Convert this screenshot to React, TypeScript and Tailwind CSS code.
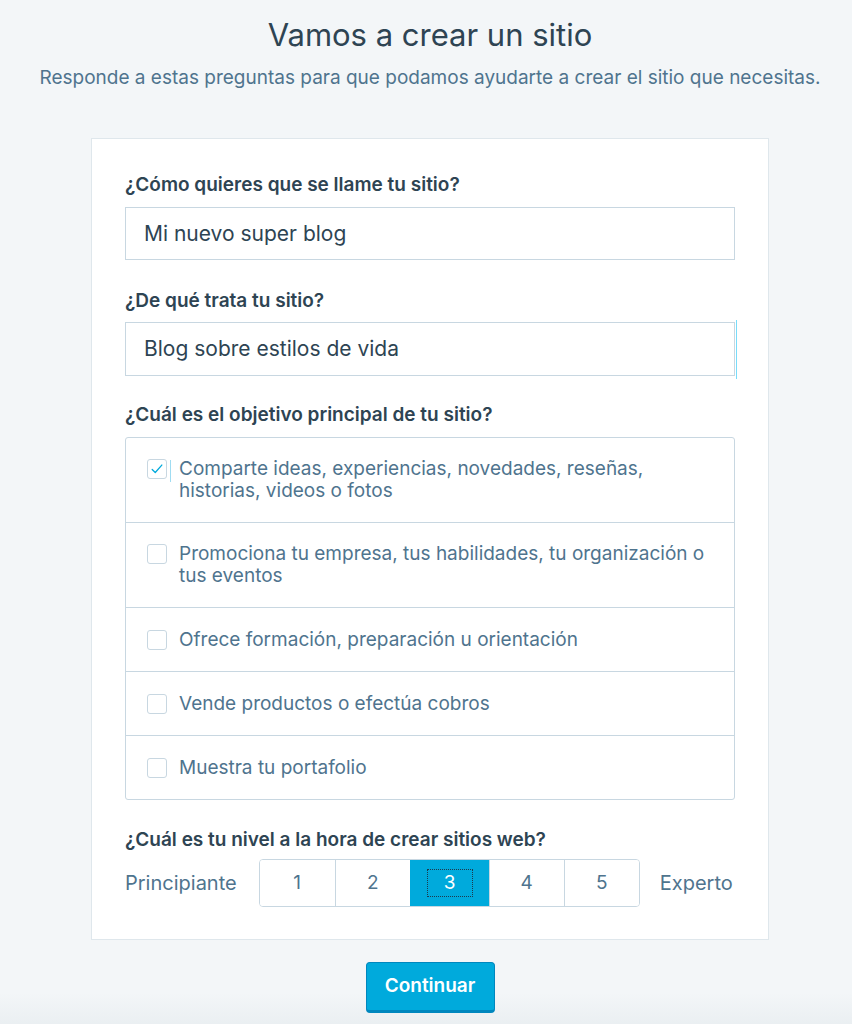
import { useState } from 'react';

const goals = [
  'Comparte ideas, experiencias, novedades, reseñas, historias, videos o fotos',
  'Promociona tu empresa, tus habilidades, tu organización o tus eventos',
  'Ofrece formación, preparación u orientación',
  'Vende productos o efectúa cobros',
  'Muestra tu portafolio',
];

function CheckIcon() {
  return (
    <svg viewBox="0 0 16 16" className="h-[14px] w-[14px]" fill="none">
      <path d="M2.5 8.5l3.5 3.5 7.5-8.5" stroke="#00aadc" strokeWidth="1.5" strokeLinecap="round" strokeLinejoin="round" />
    </svg>
  );
}

export default function App() {
  const [checked, setChecked] = useState<boolean[]>([true, false, false, false, false]);
  const [level, setLevel] = useState(3);

  return (
    <div
      className="relative min-h-screen bg-[#f3f6f8] flex flex-col items-center pl-[8px] text-[#2e4453]"
      style={{ fontFamily: 'Inter, "Noto Sans", sans-serif' }}
    >
      <h1 className="mt-[15px] text-[31px] leading-[40px] font-normal">Vamos a crear un sitio</h1>
      <p className="mt-[9px] text-[19px] leading-[28px] text-[#4f748e]">
        Responde a estas preguntas para que podamos ayudarte a crear el sitio que necesitas.
      </p>

      <div className="mt-[46px] w-[678px] bg-white border border-[#dfe7ec] px-[33px] pt-[34px] pb-[32px]">
        <label className="block text-[19px] leading-[24px] font-semibold">¿Cómo quieres que se llame tu sitio?</label>
        <div className="mt-[10px] h-[53px] border border-[#c8d7e1] flex items-center px-[18px] text-[21px]">
          Mi nuevo super blog
        </div>

        <label className="mt-[29px] block text-[19px] leading-[24px] font-semibold">¿De qué trata tu sitio?</label>
        <div className="relative mt-[9px] h-[54px] border border-[#c8d7e1] flex items-center px-[18px] text-[21px]">
          Blog sobre estilos de vida
          <span className="absolute right-[-3px] top-[-3px] bottom-[-4px] w-px bg-[#78dcfa]" />
        </div>

        <label className="mt-[27px] block text-[19px] leading-[24px] font-semibold">¿Cuál es el objetivo principal de tu sitio?</label>
        <div className="mt-[10px] border border-[#c8d7e1] rounded-[3px]">
          {goals.map((g, i) => (
            <div
              key={g}
              onClick={() => setChecked(c => c.map((v, j) => (j === i ? !v : v)))}
              className={`flex items-start pl-[21px] pr-[20px] border-[#c8d7e1] cursor-pointer ${i > 0 ? 'border-t' : ''} ${
                i < 2 ? 'py-[20px]' : 'py-[20.5px]'
              }`}
            >
              <span className="relative mt-[1px] mr-[12px] flex h-[20px] w-[20px] shrink-0 items-center justify-center rounded-[3px] border border-[#c8d7e1] bg-white">
                {checked[i] && <CheckIcon />}
                {i === 0 && <span className="absolute right-[-5px] top-[0px] h-[22px] w-px bg-[#9fdcf2]" />}
              </span>
              <span className="text-[19px] leading-[22px] text-[#4f748e]">{g}</span>
            </div>
          ))}
        </div>

        <label className="mt-[28px] block text-[19px] leading-[24px] font-semibold">¿Cuál es tu nivel a la hora de crear sitios web?</label>
        <div className="mt-[7px] flex items-center">
          <span className="text-[20px] text-[#4f748e]">Principiante</span>
          <div className="ml-[22px] flex h-[48px] border border-[#c8d7e1] rounded-[4px] overflow-hidden">
            {[1, 2, 3, 4, 5].map(n => (
              <button
                key={n}
                onClick={() => setLevel(n)}
                className={`flex items-center justify-center text-[19px] ${n === 3 ? 'w-[79px]' : 'w-[75px]'} ${n > 1 ? 'border-l' : ''} ${
                  level === n ? 'bg-[#00aadc] text-white border-[#00aadc]' : 'bg-white text-[#4f748e] border-[#c8d7e1]'
                }`}
              >
                <span
                  className={`flex items-center justify-center ${
                    level === n ? 'h-[28px] w-[46px] border border-dotted border-[#1d3a4d]' : ''
                  }`}
                >
                  {n}
                </span>
              </button>
            ))}
          </div>
          <span className="ml-[20px] text-[20px] text-[#4f748e]">Experto</span>
        </div>
      </div>

      <button className="relative z-10 mt-[22px] h-[51px] w-[129px] rounded-[4px] bg-[#00aadc] border border-[#0087be] border-b-[3px] text-white text-[19px] font-semibold">
        Continuar
      </button>
      <div className="h-[20px]" />
      <div className="pointer-events-none absolute bottom-0 left-0 right-0 h-[40px] bg-gradient-to-b from-[#f3f6f8] to-[#e8edf0]" />
    </div>
  );
}
